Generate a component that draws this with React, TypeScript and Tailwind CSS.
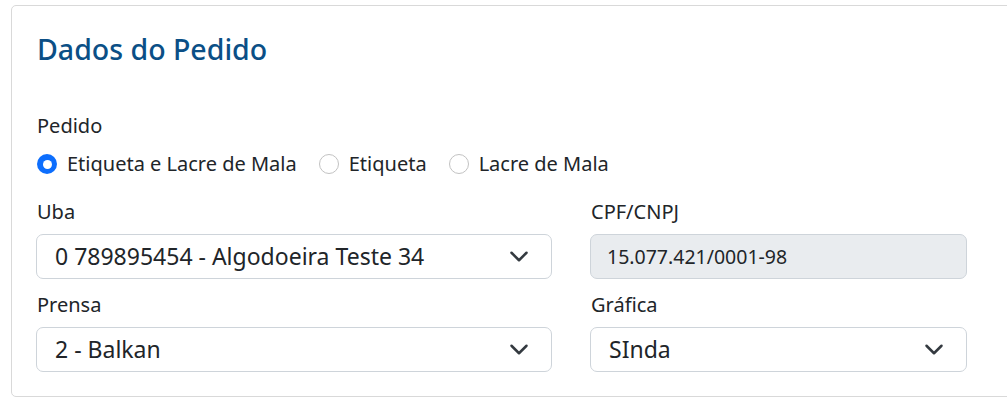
import { useState } from "react";

const font = { fontFamily: '"Noto Sans", "Open Sans", sans-serif' };

function Chevron() {
  return (
    <svg width="20" height="15" viewBox="0 0 16 12" fill="none" className="shrink-0">
      <path d="m2 3 6 6 6-6" stroke="#343a40" strokeWidth="2" strokeLinecap="round" strokeLinejoin="round" />
    </svg>
  );
}

function Radio({ checked, label, onClick }: { checked: boolean; label: string; onClick: () => void }) {
  return (
    <button onClick={onClick} className="h-[28px] flex items-center gap-[10px] text-[20px] leading-[28px] text-[#212529]">
      {checked ? (
        <span className="w-5 h-5 rounded-full bg-[#0d6efd] flex items-center justify-center">
          <span className="w-[9px] h-[9px] rounded-full bg-white" />
        </span>
      ) : (
        <span className="w-5 h-5 rounded-full border border-[#c2c2c2] bg-white" />
      )}
      <span>{label}</span>
    </button>
  );
}

function Field({ label, children }: { label: string; children: React.ReactNode }) {
  return (
    <div className="flex flex-col gap-[10px]">
      <label className="pl-px text-[20px] leading-[24px] text-[#212529]">{label}</label>
      {children}
    </div>
  );
}

function FakeSelect({ value }: { value: string }) {
  return (
    <div className="h-[45px] border border-[#ced4da] rounded-[7px] bg-white flex items-center justify-between pl-[18px] pr-[22px] text-[23px] text-[#212529]">
      <span>{value}</span>
      <Chevron />
    </div>
  );
}

export default function App() {
  const [tipo, setTipo] = useState("ambos");

  return (
    <div style={font} className="w-[1007px] h-[413px] overflow-hidden bg-white pt-[5px] pl-[11px]">
      <div className="w-[1020px] border border-[#d9d9d9] rounded-[5px] px-[24px] pt-[25px] pb-[24px]">
        <h2 className="pl-px text-[28.5px] leading-[36px] font-medium text-[#0b4f86]">Dados do Pedido</h2>

        <div className="mt-[47px] pl-px text-[20px] leading-[24px] text-[#212529]">Pedido</div>
        <div className="mt-[12px] pl-px flex items-center gap-[22px]">
          <Radio checked={tipo === "ambos"} label="Etiqueta e Lacre de Mala" onClick={() => setTipo("ambos")} />
          <Radio checked={tipo === "etiqueta"} label="Etiqueta" onClick={() => setTipo("etiqueta")} />
          <Radio checked={tipo === "lacre"} label="Lacre de Mala" onClick={() => setTipo("lacre")} />
        </div>

        <div className="mt-[22px] grid grid-cols-[516px_377px] gap-x-[38px] gap-y-[14px]">
          <Field label="Uba">
            <FakeSelect value="0 789895454 - Algodoeira Teste 34" />
          </Field>
          <Field label="CPF/CNPJ">
            <div className="h-[45px] border border-[#ced4da] rounded-[7px] bg-[#e9ecef] flex items-center pl-[16px] text-[19.5px] text-[#212529]">
              15.077.421/0001-98
            </div>
          </Field>
          <Field label="Prensa">
            <FakeSelect value="2 - Balkan" />
          </Field>
          <Field label="Gráfica">
            <FakeSelect value="SInda" />
          </Field>
        </div>
      </div>
    </div>
  );
}
